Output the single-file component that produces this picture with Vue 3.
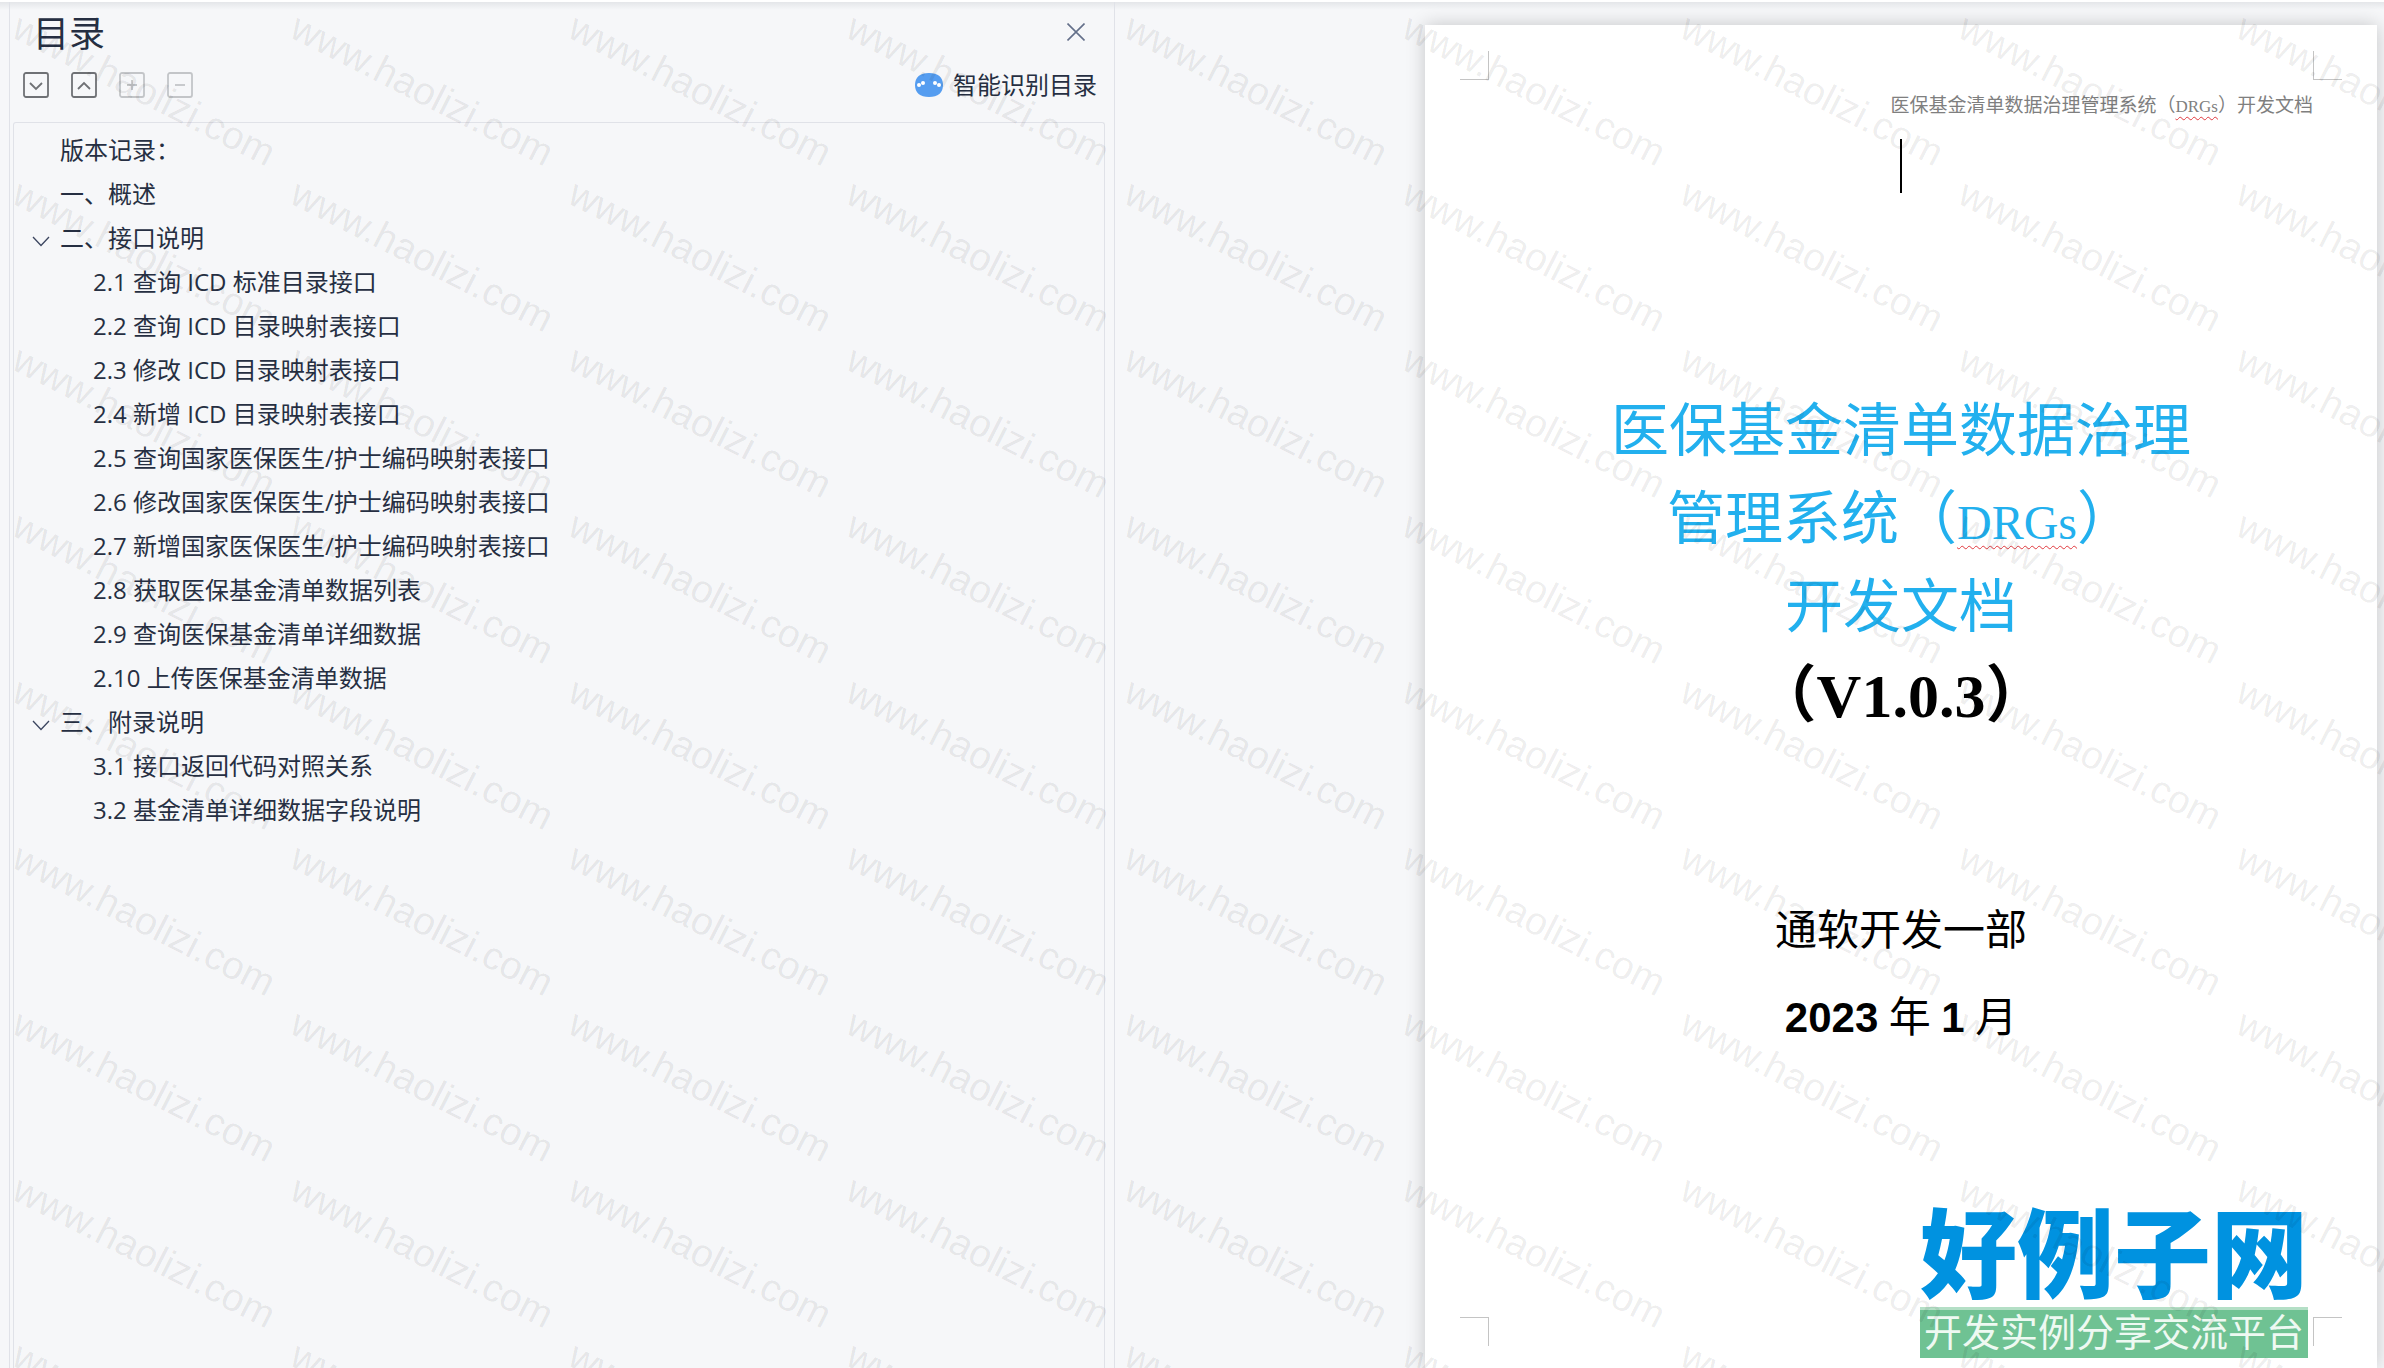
<template>
  <div class="app">
    <div class="top-strip"></div>
    <div class="workspace">
      <!-- 目录面板 -->
      <aside class="outline-panel">
        <div class="panel-header">
          <h1 class="panel-title">目录</h1>
          <button class="icon-button close-button" aria-label="关闭">
            <svg width="18" height="18" viewBox="0 0 18 18">
              <path d="M0.5 0.5 L17.5 17.5 M17.5 0.5 L0.5 17.5" stroke="#64708a" stroke-width="1.6" fill="none" />
            </svg>
          </button>
        </div>

        <div class="panel-toolbar">
          <div class="tool-group">
            <button
              v-for="tool in tools"
              :key="tool.label"
              class="icon-button"
              :disabled="tool.disabled"
              :aria-label="tool.label"
              @click="tool.action"
            >
              <svg width="26" height="26" viewBox="0 0 26 26" fill="none" :stroke="tool.disabled ? '#c3c5c8' : '#6f7175'">
                <rect x="1" y="1" width="24" height="24" rx="2" stroke-width="1.8" />
                <path :d="tool.path" stroke-width="1.8" />
              </svg>
            </button>
          </div>
          <button class="smart-button">
            <svg width="28" height="24" viewBox="0 0 28 24">
              <path d="M14 0 C23 0 28 4 28 12 C28 20 23 24 14 24 C5 24 0 20 0 12 C0 4 5 0 14 0 Z" fill="#559df0" />
              <g fill="#fff">
                <circle cx="4" cy="12" r="2" />
                <circle cx="8" cy="10" r="2" />
                <circle cx="20" cy="10" r="2" />
                <circle cx="24" cy="12" r="2" />
              </g>
            </svg>
            <span>智能识别目录</span>
          </button>
        </div>

        <nav class="outline">
          <ul class="outline-list">
            <li v-for="item in visibleItems" :key="item.text" class="outline-item" :class="{ child: item.parent }">
              <button
                v-if="item.id"
                class="icon-button toggle"
                :class="{ folded: collapsed[item.id] }"
                aria-label="展开或折叠"
                @click="collapsed[item.id] = !collapsed[item.id]"
              >
                <svg width="18" height="11" viewBox="0 0 18 11">
                  <path d="M1 1 L9 9.5 L17 1" stroke="#3c4660" stroke-width="1.3" fill="none" />
                </svg>
              </button>
              <a href="#" @click.prevent>{{ item.text }}</a>
            </li>
          </ul>
        </nav>
      </aside>

      <!-- 文档区域 -->
      <main class="document-area">
        <article class="paper">
          <i class="corner top left"></i>
          <i class="corner top right"></i>
          <i class="corner bottom left"></i>
          <i class="corner bottom right"></i>

          <p class="page-header">医保基金清单数据治理管理系统（<span class="spell">DRGs</span>）开发文档</p>
          <div class="caret"></div>

          <h2 class="doc-title">
            医保基金清单数据治理<br />管理系统（<span class="spell">DRGs</span>）<br />开发文档
          </h2>
          <p class="doc-version">（V1.0.3）</p>

          <div class="doc-author">
            <p>通软开发一部</p>
            <p><b>2023</b> 年 <b>1</b> 月</p>
          </div>
        </article>
      </main>
    </div>

    <div class="site-logo">
      <div class="logo-name">好例子网</div>
      <div class="logo-slogan">开发实例分享交流平台</div>
    </div>

    <!-- 水印 -->
    <div class="watermark" aria-hidden="true">
      <div v-for="n in 81" :key="n" class="mark"><span>www.haolizi.com</span></div>
    </div>
  </div>
</template>

<script setup>
import { ref, computed } from 'vue'

const collapsed = ref({ api: false, appendix: false })

const items = [
  { text: '版本记录：' },
  { text: '一、概述' },
  { text: '二、接口说明', id: 'api' },
  { text: '2.1 查询 ICD 标准目录接口', parent: 'api' },
  { text: '2.2 查询 ICD 目录映射表接口', parent: 'api' },
  { text: '2.3 修改 ICD 目录映射表接口', parent: 'api' },
  { text: '2.4 新增 ICD 目录映射表接口', parent: 'api' },
  { text: '2.5 查询国家医保医生/护士编码映射表接口', parent: 'api' },
  { text: '2.6 修改国家医保医生/护士编码映射表接口', parent: 'api' },
  { text: '2.7 新增国家医保医生/护士编码映射表接口', parent: 'api' },
  { text: '2.8 获取医保基金清单数据列表', parent: 'api' },
  { text: '2.9 查询医保基金清单详细数据', parent: 'api' },
  { text: '2.10 上传医保基金清单数据', parent: 'api' },
  { text: '三、附录说明', id: 'appendix' },
  { text: '3.1 接口返回代码对照关系', parent: 'appendix' },
  { text: '3.2 基金清单详细数据字段说明', parent: 'appendix' }
]

const visibleItems = computed(() => items.filter((item) => !item.parent || !collapsed.value[item.parent]))

const setAll = (value) => {
  collapsed.value = { api: value, appendix: value }
}

const tools = [
  { label: '全部展开', path: 'M7 11 L13 17 L19 11', action: () => setAll(false) },
  { label: '全部折叠', path: 'M7 17 L13 11 L19 17', action: () => setAll(true) },
  { label: '升级', path: 'M8 13 H18 M13 8 V18', disabled: true },
  { label: '降级', path: 'M8 13 H18', disabled: true }
]
</script>

<style>
body {
  margin: 0;
  background: #f6f7f9;
}
</style>

<style scoped>
.app {
  position: relative;
  display: flex;
  flex-direction: column;
  height: 100vh;
  overflow: hidden;
  background: #f6f7f9;
  color: #262f42;
  font-family: "Open Sans", "Noto Sans CJK SC", sans-serif;
  font-size: 24px;
}

p,
h1,
h2,
ul {
  margin: 0;
  padding: 0;
  font-weight: 400;
}

button {
  padding: 0;
  border: none;
  background: none;
  color: inherit;
  font: inherit;
  cursor: pointer;
}

.top-strip {
  height: 2px;
  background: #fff;
}

.workspace {
  flex: 1;
  display: grid;
  grid-template-columns: 1106fr 1269fr;
  min-height: 0;
  padding-left: 9px;
  background: linear-gradient(#e4e6e9, #f6f7f9 8px);
}

.outline-panel {
  display: flex;
  flex-direction: column;
  box-sizing: border-box;
  min-width: 0;
  padding: 0 9px 0 3px;
  border: solid #e0e2e8;
  border-width: 0 1px;
}

.panel-header {
  display: flex;
  justify-content: space-between;
  align-items: center;
  height: 60px;
  padding: 0 20px 0 20px;
}

.panel-title {
  font-size: 36px;
  line-height: 60px;
  padding-top: 4px;
}

.icon-button {
  display: flex;
}

.icon-button:disabled {
  cursor: default;
}

.panel-toolbar {
  display: flex;
  justify-content: space-between;
  align-items: center;
  height: 46px;
  margin-bottom: 14px;
  padding: 0 8px 0 10px;
}

.tool-group {
  display: flex;
  gap: 22px;
}

.smart-button {
  display: flex;
  align-items: center;
  gap: 10px;
  line-height: 48px;
}

.outline {
  flex: 1;
  border: 1px solid #e0e2e8;
  border-bottom: none;
  border-radius: 3px 3px 0 0;
  padding-top: 5px;
}

.outline-list {
  list-style: none;
}

.outline-item {
  display: flex;
  align-items: center;
  height: 44px;
  padding-left: 46px;
  line-height: 44px;
  white-space: nowrap;
}

.outline-item.child {
  padding-left: 79px;
}

.outline-item a {
  color: inherit;
  text-decoration: none;
}

.toggle {
  margin-left: -28px;
  margin-right: 10px;
  padding-top: 6px;
}

.toggle.folded svg {
  transform: rotate(-90deg);
}

.document-area {
  display: grid;
  grid-template-columns: 952fr;
  padding: 23px 7px 0 24.43%;
  overflow: hidden;
}

.paper {
  position: relative;
  box-sizing: border-box;
  padding: 69px 64px 0;
  background: #fff;
  box-shadow: 0 0 18px rgba(0, 0, 0, 0.2);
  color: #000;
  font-family: "Liberation Serif", "Noto Sans CJK SC", serif;
  text-align: center;
}

.corner {
  position: absolute;
  width: 28px;
  height: 28px;
  border: 0 solid #c4c4c4;
}

.corner.top {
  top: 26px;
  border-bottom-width: 1px;
}

.corner.bottom {
  bottom: 22px;
  border-top-width: 1px;
}

.corner.left {
  left: 35px;
  border-right-width: 1px;
}

.corner.right {
  right: 35px;
  border-left-width: 1px;
}

.page-header {
  color: #7f7f7f;
  font-size: 19px;
  line-height: 24px;
  text-align: right;
}

.page-header .spell {
  font-size: 17px;
  text-underline-offset: 4px;
}

.spell {
  line-height: 1;
  text-decoration: underline wavy #e0393e 1px;
  text-decoration-skip-ink: none;
}

.caret {
  width: 2px;
  height: 54px;
  margin: 21px auto 195px;
  background: #000;
}

.doc-title,
.doc-version {
  font-size: 58px;
  line-height: 88px;
}

.doc-title {
  color: #22b0ee;
}

.doc-title .spell {
  font-size: 48px;
  text-underline-offset: 6px;
}

.doc-version {
  font-size: 62px;
  font-weight: 700;
}

.doc-author {
  margin-top: 148px;
  font-size: 42px;
  line-height: 87px;
}

.doc-author b {
  font-family: "Liberation Sans", sans-serif;
  line-height: 1;
}

.site-logo {
  position: absolute;
  right: 76px;
  bottom: 10px;
  text-align: center;
  font-family: "Noto Sans CJK SC", sans-serif;
  white-space: nowrap;
}

.logo-name {
  color: #0092e0;
  font-size: 97px;
  font-weight: 900;
  line-height: 104px;
  padding-bottom: 7px;
}

.logo-slogan {
  padding-bottom: 8px;
  border-top: 3px solid #b4dfc6;
  background: #6fc293;
  color: #eef9f2;
  font-size: 38px;
  line-height: 40px;
}

.watermark {
  position: absolute;
  top: 0;
  left: 0;
  display: grid;
  grid-template-columns: repeat(9, 278px);
  grid-auto-rows: 166px;
  pointer-events: none;
}

.mark {
  display: flex;
  align-items: center;
  justify-content: center;
  padding: 14px 0 0 10px;
  color: rgba(0, 0, 0, 0.08);
  font-family: "Liberation Sans", sans-serif;
  font-size: 39px;
  line-height: 40px;
}

.mark span {
  transform: rotate(27deg);
}
</style>
